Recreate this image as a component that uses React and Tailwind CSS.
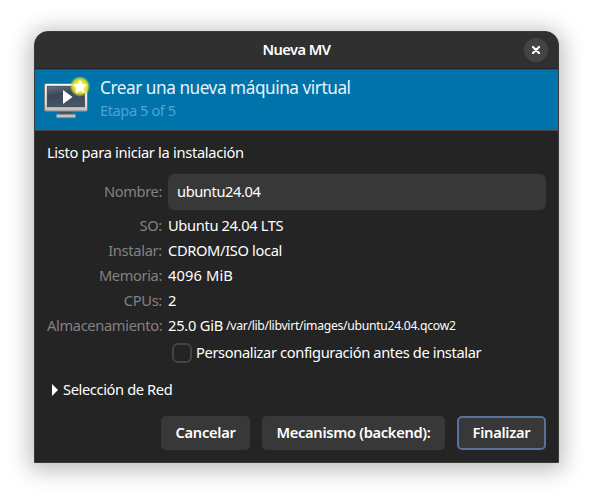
const details = [
  { label: 'SO:', value: 'Ubuntu 24.04 LTS', labelClass: 'tracking-[-0.3px]', valueClass: 'tracking-[-0.35px]' },
  { label: 'Instalar:', value: 'CDROM/ISO local', labelClass: 'tracking-[-0.3px]', valueClass: 'tracking-[-0.35px]' },
  { label: 'Memoria:', value: '4096 MiB', labelClass: 'tracking-[-0.38px]', valueClass: 'tracking-[0.13px]' },
  { label: 'CPUs:', value: '2', labelClass: 'tracking-[-0.3px]', valueClass: 'tracking-[-0.35px]' },
  { label: 'Almacenamiento:', value: '25.0 GiB', labelClass: 'pr-px tracking-[-0.35px]', valueClass: 'tracking-[-0.23px]', path: '/var/lib/libvirt/images/ubuntu24.04.qcow2' },
];

function MonitorIcon() {
  return (
    <svg className="h-[42px] w-[48px] shrink-0 overflow-visible" viewBox="0 0 48 42">
      <defs>
        <linearGradient id="frame" x1="0" y1="0" x2="0" y2="1">
          <stop offset="0" stopColor="#f8f8f8" />
          <stop offset="0.75" stopColor="#dedede" />
          <stop offset="1" stopColor="#b8b8b8" />
        </linearGradient>
        <linearGradient id="screen" x1="0" y1="0" x2="0.3" y2="1">
          <stop offset="0" stopColor="#66717f" />
          <stop offset="0.45" stopColor="#3d4857" />
          <stop offset="1" stopColor="#465369" />
        </linearGradient>
        <radialGradient id="glow">
          <stop offset="0.45" stopColor="#f0ee20" />
          <stop offset="0.72" stopColor="#dfe222" stopOpacity="0.9" />
          <stop offset="1" stopColor="#b5d040" stopOpacity="0" />
        </radialGradient>
      </defs>
      <path d="M16.500 34h11l1 4h-13z" fill="#4b4e52" />
      <rect x="12.5" y="37.300" width="19" height="3.400" rx="0.8" fill="#c4c4c4" stroke="#85878a" strokeWidth="0.9" />
      <rect x="0.5" y="6.500" width="43" height="27.700" rx="1.500" fill="url(#frame)" stroke="#77797c" />
      <rect x="3.2" y="9.200" width="37.300" height="20.600" fill="url(#screen)" stroke="#303945" strokeWidth="0.7" />
      <path d="M19 13v14l9.500-7z" fill="#fff" />
      <circle cx="36" cy="9.500" r="10.500" fill="url(#glow)" />
      <path d="M36 3.300l2.100 4 4.400.6-3.200 3.200.8 4.500-4.100-2-4.100 2 .8-4.500-3.200-3.200 4.400-.6z" fill="#fff" stroke="#fff" strokeWidth="0.8" strokeLinejoin="round" />
    </svg>
  );
}

function DialogButton({ children, className }) {
  return (
    <button className={`flex h-[34px] items-center justify-center whitespace-nowrap rounded-[5px] bg-[#383838] text-[14.667px] font-semibold text-white ${className}`}>
      <span className="-mt-px">{children}</span>
    </button>
  );
}

export default function App() {
  return (
    <div className="h-[500px] w-[593px] overflow-hidden bg-white pl-[34px] pt-[31px] font-['Noto_Sans',sans-serif] text-[14.667px] leading-[25px] text-white">
      <main className="flex h-[432px] w-[525px] flex-col overflow-hidden rounded-t-[14px] border border-[#3a3a3a] bg-[#242424] shadow-[0_3px_22px_4px_rgba(0,0,0,0.27)]">
        <header className="grid h-[37px] shrink-0 grid-cols-[1fr_auto_1fr] items-center border-b border-[#222222] bg-[#303030] px-[10px]">
          <span />
          <h1 className="-mt-[2px] text-[14.667px] font-semibold tracking-[-0.55px]">Nueva MV</h1>
          <button aria-label="Cerrar" className="flex size-6 items-center justify-center justify-self-end rounded-full bg-[#444444]">
            <svg className="size-2" viewBox="0 0 8 8"><path d="M1 1l6 6M7 1L1 7" stroke="#fff" strokeWidth="2.200" strokeLinecap="round" /></svg>
          </button>
        </header>
        <section className="flex h-[62px] shrink-0 border-y border-[#484848] bg-[#0073aa] pl-[9px] pt-[7px]">
          <MonitorIcon />
          <div className="ml-[8px] whitespace-nowrap">
            <h2 className="text-[17.200px] leading-[22px] tracking-[-0.45px] text-[#e8f2f7]">Crear una nueva máquina virtual</h2>
            <p className="text-[14.667px] leading-[22px] tracking-[-0.44px] text-[#4aa5da]">Etapa 5 of 5</p>
          </div>
        </section>
        <section className="flex flex-1 flex-col px-[12px] pt-[9px]">
          <p className="tracking-[-0.31px]">Listo para iniciar la instalación</p>
          <div className="mt-[9px] grid grid-cols-[115px_1fr] items-center gap-x-[6px] whitespace-nowrap">
            <label htmlFor="name" className="-mt-[2px] text-right tracking-[-0.4px] text-[#828282]">Nombre:</label>
            <input id="name" defaultValue="ubuntu24.04" className="h-9 w-full rounded-[6px] bg-[#383838] px-[9px] pb-[2px] tracking-[-0.42px] outline-none" />
          </div>
          <dl className="mt-[3px] grid grid-cols-[115px_1fr] gap-x-[6px] whitespace-nowrap">
            {details.map((d) => (
              <div key={d.label} className="col-span-2 grid grid-cols-subgrid">
                <dt className={`text-right text-[#828282] ${d.labelClass}`}>{d.label}</dt>
                <dd className="flex items-center">
                  <span className={d.valueClass}>{d.value}</span>
                  {d.path && <span className="ml-[3px] text-[12.200px] tracking-[-0.3px]">{d.path}</span>}
                </dd>
              </div>
            ))}
          </dl>
          <label className="ml-[125px] mt-[4px] flex h-[22px] items-center whitespace-nowrap">
            <input type="checkbox" className="size-5 appearance-none rounded-[6px] border-2 border-[#444444]" />
            <span className="-mt-[2px] ml-[4px] tracking-[-0.37px]">Personalizar configuración antes de instalar</span>
          </label>
          <div className="mt-[13px] flex h-[25px] items-center">
            <svg className="ml-[5px] h-3 w-[6px]" viewBox="0 0 6 12"><path d="M0 0v12l6-6z" fill="#fff" /></svg>
            <span className="ml-[5px] tracking-[-0.38px]">Selección de Red</span>
          </div>
          <footer className="mt-[14px] flex justify-end gap-[12px]">
            <DialogButton className="w-[89px] tracking-[-0.27px]">Cancelar</DialogButton>
            <DialogButton className="w-[183px] tracking-[-0.3px]">Mecanismo (backend):</DialogButton>
            <DialogButton className="w-[89px] border-2 border-[#56729a] tracking-[-0.27px]">Finalizar</DialogButton>
          </footer>
        </section>
      </main>
    </div>
  );
}
